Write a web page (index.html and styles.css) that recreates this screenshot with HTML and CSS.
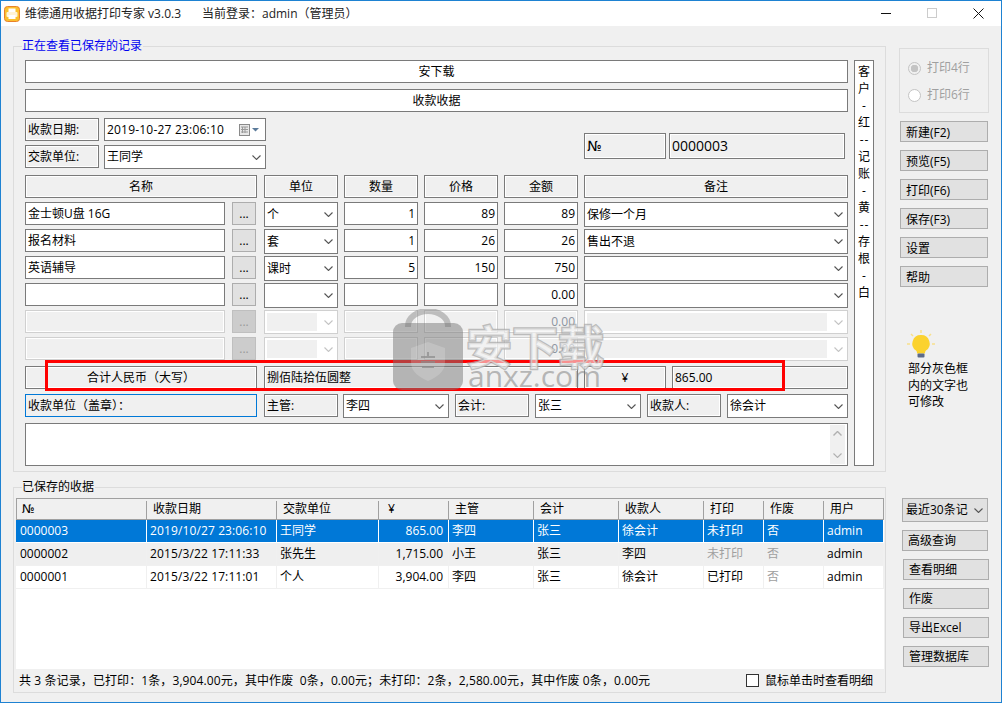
FILE: index.html
```html
<!DOCTYPE html>
<html lang="zh">
<head>
<meta charset="utf-8">
<title>维德通用收据打印专家</title>
<link rel="stylesheet" href="styles.css">
</head>
<body>
<svg class="defs" width="0" height="0" aria-hidden="true">
  <defs>
    <symbol id="chev" viewBox="0 0 9 5"><path d="M.5.5 4.5 4.5 8.5.5" fill="none" stroke="currentColor" stroke-width="1.1"/></symbol>
    <symbol id="chevup" viewBox="0 0 9 5"><path d="M.5 4.5 4.5.5 8.5 4.5" fill="none" stroke="currentColor" stroke-width="1.4"/></symbol>
  </defs>
</svg>
<div class="window">
  <header class="titlebar">
    <svg class="appicon" width="16" height="16" viewBox="0 0 16 16"><rect x=".5" y=".5" width="15" height="15" rx="3" fill="#fbc02d" stroke="#e9812a"/><rect x="4.5" y="2.5" width="7" height="3.5" fill="#fff"/><rect x="2.5" y="6" width="11" height="5" rx="1" fill="#fff3d6"/><rect x="4.5" y="9" width="7" height="4" fill="#fff"/></svg>
    <span class="apptitle">维德通用收据打印专家 v3.0.3</span>
    <span class="login">当前登录：admin（管理员）</span>
    <div class="winctl">
      <span class="ctl"><svg width="11" height="11" viewBox="0 0 11 11"><path d="M0 5.5h10" stroke="#111"/></svg></span>
      <span class="ctl"><svg width="11" height="11" viewBox="0 0 11 11"><rect x=".5" y=".5" width="9" height="9" fill="none" stroke="#ccc"/></svg></span>
      <span class="ctl"><svg width="11" height="11" viewBox="0 0 11 11"><path d="M.5.5l10 10M10.500.5l-10 10" stroke="#111"/></svg></span>
    </div>
  </header>

  <div class="content">
    <div class="toprow">
      <fieldset class="group group-form">
        <legend class="legend legend-blue">正在查看已保存的记录</legend>
        <div class="formwrap">
          <div class="form">
            <div class="fld bar c">安下载</div>
            <div class="fld bar c">收款收据</div>
            <div class="metarow">
              <div class="metaleft">
                <div class="r">
                  <div class="fld lab w-lab">收款日期:</div>
                  <div class="fld val w-val"><span class="stamp">2019-10-27 23:06:10</span>
                    <svg class="cal" width="21" height="12" viewBox="0 0 21 12"><rect x=".5" y=".5" width="10" height="11" fill="#e8e8e8" stroke="#8a8a8a"/><path d="M2 3h7M2 5.500h7M2 8h7M3.500 3v6M6 3v6" stroke="#9a9a9a"/><path d="M13 4h7l-3.500 3.500z" fill="#5a7a9a"/></svg>
                  </div>
                </div>
                <div class="r">
                  <div class="fld lab w-lab">交款单位:</div>
                  <div class="fld val w-val sel">王同学<svg class="chev"><use href="#chev"/></svg></div>
                </div>
              </div>
              <div class="metaright">
                <div class="fld lab no no-a">№</div>
                <div class="fld lab no no-b">0000003</div>
              </div>
            </div>

            <div class="r head">
              <div class="fld lab c w-head">名称</div>
              <div class="fld lab c w-unit">单位</div>
              <div class="fld lab c w-n">数量</div>
              <div class="fld lab c w-n">价格</div>
              <div class="fld lab c w-n">金额</div>
              <div class="fld lab c w-note">备注</div>
            </div>

            <div class="r item">
              <div class="fld val w-name">金士顿U盘 16G</div><div class="more w-more">...</div>
              <div class="fld val tall sel w-unit">个<svg class="chev"><use href="#chev"/></svg></div>
              <div class="fld val num w-n">1</div><div class="fld val num w-n">89</div><div class="fld val num w-n">89</div>
              <div class="fld val tall sel w-note">保修一个月<svg class="chev"><use href="#chev"/></svg></div>
            </div>
            <div class="r item">
              <div class="fld val w-name">报名材料</div><div class="more w-more">...</div>
              <div class="fld val tall sel w-unit">套<svg class="chev"><use href="#chev"/></svg></div>
              <div class="fld val num w-n">1</div><div class="fld val num w-n">26</div><div class="fld val num w-n">26</div>
              <div class="fld val tall sel w-note">售出不退<svg class="chev"><use href="#chev"/></svg></div>
            </div>
            <div class="r item">
              <div class="fld val w-name">英语辅导</div><div class="more w-more">...</div>
              <div class="fld val tall sel w-unit">课时<svg class="chev"><use href="#chev"/></svg></div>
              <div class="fld val num w-n">5</div><div class="fld val num w-n">150</div><div class="fld val num w-n">750</div>
              <div class="fld val tall sel w-note"><svg class="chev"><use href="#chev"/></svg></div>
            </div>
            <div class="r item">
              <div class="fld val w-name"></div><div class="more w-more">...</div>
              <div class="fld val tall sel w-unit"><svg class="chev"><use href="#chev"/></svg></div>
              <div class="fld val num w-n"></div><div class="fld val num w-n"></div><div class="fld val num w-n">0.00</div>
              <div class="fld val tall sel w-note"><svg class="chev"><use href="#chev"/></svg></div>
            </div>
            <div class="r item">
              <div class="fld off w-name"></div><div class="more more-off w-more">...</div>
              <div class="fld offsel w-unit"><span class="offfill"></span><svg class="chev"><use href="#chev"/></svg></div>
              <div class="fld off w-n"></div><div class="fld off w-n"></div><div class="fld off num w-n">0.00</div>
              <div class="fld offsel w-note"><span class="offfill"></span><svg class="chev"><use href="#chev"/></svg></div>
            </div>
            <div class="r item">
              <div class="fld off w-name"></div><div class="more more-off w-more">...</div>
              <div class="fld offsel w-unit"><span class="offfill"></span><svg class="chev"><use href="#chev"/></svg></div>
              <div class="fld off w-n"></div><div class="fld off w-n"></div><div class="fld off num w-n">0.00</div>
              <div class="fld offsel w-note"><span class="offfill"></span><svg class="chev"><use href="#chev"/></svg></div>
            </div>

            <div class="r total">
              <div class="fld lab c w-head">合计人民币（大写）</div>
              <div class="fld lab w-big">捌佰陆拾伍圆整</div>
              <div class="fld lab c w-yen">¥</div>
              <div class="fld lab w-sum">865.00</div>
            </div>

            <div class="r sign">
              <div class="fld lab active w-head">收款单位（盖章）：</div>
              <div class="fld lab w-unit">主管:</div>
              <div class="fld val sel w-s1">李四<svg class="chev"><use href="#chev"/></svg></div>
              <div class="fld lab w-l2">会计:</div>
              <div class="fld val sel w-s2">张三<svg class="chev"><use href="#chev"/></svg></div>
              <div class="fld lab w-l2">收款人:</div>
              <div class="fld val sel w-s3">徐会计<svg class="chev"><use href="#chev"/></svg></div>
            </div>

            <div class="memo">
              <div class="scroll">
                <svg class="chev"><use href="#chevup"/></svg>
                <svg class="chev"><use href="#chev"/></svg>
              </div>
            </div>
          </div>

          <div class="stub">
            <span>客</span><span>户</span><span>-</span><span>红</span><span>--</span><span>记</span><span>账</span><span>-</span><span>黄</span><span>--</span><span>存</span><span>根</span><span>-</span><span>白</span>
          </div>
        </div>
      </fieldset>

      <aside class="side side-top">
        <div class="radios">
          <div class="radio"><span class="dot on"></span>打印4行</div>
          <div class="radio"><span class="dot"></span>打印6行</div>
        </div>
        <div class="btn">新建(F2)</div>
        <div class="btn">预览(F5)</div>
        <div class="btn">打印(F6)</div>
        <div class="btn">保存(F3)</div>
        <div class="btn">设置</div>
        <div class="btn">帮助</div>
        <svg class="bulb" width="28" height="29" viewBox="0 0 28 29">
          <g stroke="#f7e08c" stroke-width="1.500"><path d="M14 0v3M4 4l2 2M24 4l-2 2M0 14h3M25 14h3"/></g>
          <path d="M14 5a8.500 8.500 0 0 0-5 15.500c1 1 1 2 1 3h8c0-1 0-2 1-3A8.500 8.500 0 0 0 14 5z" fill="#fbd22e"/>
          <rect x="10.500" y="23.500" width="7" height="4" rx="1" fill="#5d6b8a"/>
        </svg>
        <p class="tip">部分灰色框<br>内的文字也<br>可修改</p>
      </aside>
    </div>

    <div class="bottomrow">
      <fieldset class="group group-list">
        <legend class="legend legend-list">已保存的收据</legend>
        <div class="tablewrap">
          <table class="grid">
            <colgroup>
              <col class="c131"><col class="c130"><col class="c102"><col class="c70"><col class="c85"><col class="c85"><col class="c85"><col class="c60"><col class="c60"><col class="c60">
            </colgroup>
            <thead>
              <tr><th class="nosign">№</th><th>收款日期</th><th>交款单位</th><th class="yen">¥</th><th>主管</th><th>会计</th><th>收款人</th><th>打印</th><th>作废</th><th>用户</th></tr>
            </thead>
            <tbody>
              <tr class="selrow"><td>0000003</td><td class="when">2019/10/27 23:06:10</td><td>王同学</td><td class="amt">865.00</td><td>李四</td><td>张三</td><td>徐会计</td><td>未打印</td><td>否</td><td>admin</td></tr>
              <tr class="alt"><td>0000002</td><td class="when">2015/3/22 17:11:33</td><td>张先生</td><td class="amt">1,715.00</td><td>小王</td><td>张三</td><td>李四</td><td class="mute">未打印</td><td class="mute">否</td><td>admin</td></tr>
              <tr><td>0000001</td><td class="when">2015/3/22 17:11:01</td><td>个人</td><td class="amt">3,904.00</td><td>李四</td><td>张三</td><td>徐会计</td><td>已打印</td><td class="mute">否</td><td>admin</td></tr>
            </tbody>
          </table>
        </div>
        <div class="status">
          <span class="summary">共 3 条记录，已打印：1条，3,904.00元，其中作废&nbsp; 0条，0.00元；未打印：2条，2,580.00元，其中作废 0条，0.00元</span>
          <span class="check"><span class="box"></span>鼠标单击时查看明细</span>
        </div>
      </fieldset>
      <aside class="side side-bottom">
        <div class="fld val sel filter"><span class="clip">最近30条记录</span><svg class="chev"><use href="#chev"/></svg></div>
        <div class="btn btn-b first">高级查询</div>
        <div class="btn btn-b">查看明细</div>
        <div class="btn btn-b">作废</div>
        <div class="btn btn-b">导出Excel</div>
        <div class="btn btn-b">管理数据库</div>
      </aside>
    </div>
  </div>

  <div class="highlight"></div>
  <div class="watermark">
    <svg class="wm-lock" width="72" height="82" viewBox="0 0 72 82">
      <path d="M16 18V17a20 15 0 0 1 40 0v1" fill="none" stroke="#8a8a8a" stroke-opacity=".5" stroke-width="6"/>
      <rect x="1" y="14" width="70" height="67" rx="9" fill="#777" fill-opacity=".5"/>
      <path d="M36 33l17 6v14c0 10-8 15-17 19-9-4-17-9-17-19V39z" fill="#fff" fill-opacity=".18"/>
      <path d="M29 48h14M29 53h14M36 43v4M30 58h12" stroke="#8a8a8a" stroke-opacity=".7" stroke-width="2" fill="none"/>
    </svg>
    <div class="wm-text">
      <div class="wm-cn">安下载</div>
      <div class="wm-en">anxz.com</div>
    </div>
  </div>
</div>
</body>
</html>
```

FILE: styles.css
```css
* { box-sizing: border-box; }
html, body { margin: 0; padding: 0; }
body {
  width: 1002px;
  height: 703px;
  overflow: hidden;
  font-family: "Open Sans", "Noto Sans CJK SC", sans-serif;
  font-size: 12px;
  line-height: 16px;
  color: #000;
}
.defs { position: absolute; }

.window {
  position: relative;
  width: 1002px;
  height: 703px;
  border: 1px solid #1e82d2;
  background: #f0f0f0;
  display: flex;
  flex-direction: column;
  overflow: hidden;
}

/* Title bar */
.titlebar {
  height: 25px;
  background: #fff;
  display: flex;
  align-items: center;
  padding-left: 3px;
  color: #222;
}
.appicon { margin-right: 5px; }
.apptitle { width: 177px; }
.winctl { margin-left: auto; display: flex; }
.ctl { width: 46px; height: 25px; display: flex; align-items: center; justify-content: center; }

/* Main layout */
.content { flex: 1; padding: 12px 0 0 12px; display: flex; flex-direction: column; }
.toprow, .bottomrow { display: flex; }
.bottomrow { margin-top: 7px; }

.group {
  margin: 0;
  min-width: 0;
  border: 1px solid #dcdcdc;
}
.legend { padding: 0 1px 0 0; margin-left: -3px; height: 16px; }
.legend-blue { color: #0000f0; }
.legend-list { margin-left: 6px; }
.group-form { width: 873px; padding: 6px 11px 5px; }
.group-list { width: 873px; height: 214px; padding: 3px 1px 0 2px; }
.formwrap { display: flex; gap: 6px; }
.form { width: 823px; }

/* Fields */
.fld {
  height: 23px;
  display: flex;
  align-items: center;
  padding: 0 2px;
  border: 1px solid #7a7a7a;
  white-space: nowrap;
  flex: none;
}
.c { justify-content: center; }
.bar { background: #fff; margin-bottom: 6px; }
.val { background: #fff; }
.lab { background: #f0f0f0; box-shadow: inset 0 0 0 1px #fff; }
.num { justify-content: flex-end; }
.sel { height: 24px; padding-right: 4px; }
.tall { height: 25px; }
.active { border-color: #0078d7; box-shadow: none; }
.off { background: #f0f0f0; border-color: #d0d0d0; box-shadow: inset 0 0 0 1px #fff; color: #8c94a0; }
.offsel {
  background: #fff;
  border-color: #d0d0d0;
  height: 24px;
  padding: 2px 4px 2px 2px;
  color: #c4c4c4;
}
.offfill { flex: 1; align-self: stretch; background: #f0f0f0; margin-right: 7px; }
.chev { width: 9px; height: 5px; color: #555; flex: none; margin-left: auto; }
.offsel .chev { color: #c4c4c4; margin-left: 0; }

.r { display: flex; }
.w-lab { width: 74px; }
.w-val { width: 162px; margin-left: 5px; }
.stamp { letter-spacing: .2px; }
.cal { margin-left: auto; margin-right: 3px; }

.metarow { display: flex; }
.metaleft { display: flex; flex-direction: column; gap: 4px; }
.metaright { display: flex; margin: 15px 0 0 318px; gap: 3px; }
.no { height: 26px; font-size: 14px; }
.no-a { width: 82px; font-family: "DejaVu Sans", sans-serif; }
.no-b { width: 176px; }

.head { margin: 6px 0 4px; }
.item { height: 27px; }
.w-head { width: 232px; }
.w-name { width: 200px; }
.more {
  width: 24px;
  height: 23px;
  margin-left: 7px;
  border: 1px solid #adadad;
  background: #e1e1e1;
  display: flex;
  align-items: center;
  justify-content: center;
  flex: none;
}
.more-off { background: #cccccc; border-color: #bfbfbf; color: #9a9a9a; }
.w-unit { width: 74px; margin-left: 7px; }
.item .w-unit { margin-left: 8px; }
.w-n { width: 74px; margin-left: 6px; }
.w-note { width: 264px; margin-left: 6px; }

.total { margin-top: 2px; }
.w-big { width: 314px; margin-left: 7px; }
.w-yen { width: 82px; margin-left: 6px; }
.w-sum { width: 176px; margin-left: 6px; padding-left: 2px; }

.sign { margin-top: 5px; }
.w-s1 { width: 106px; margin-left: 5px; }
.w-s2 { width: 106px; margin-left: 6px; }
.w-s3 { width: 121px; margin-left: 6px; }
.w-l2 { width: 74px; margin-left: 6px; }

.memo {
  height: 43px;
  margin-top: 5px;
  border: 1px solid #7a7a7a;
  background: #fff;
  display: flex;
  justify-content: flex-end;
  padding: 1px 2px 1px 0;
}
.scroll {
  width: 15px;
  background: #f0f0f0;
  display: flex;
  flex-direction: column;
  justify-content: space-between;
  align-items: center;
  padding: 6px 0;
}
.scroll .chev { color: #b0b0b0; margin: 0; }

.stub {
  width: 20px;
  border: 1px solid #7a7a7a;
  background: #fff;
  display: flex;
  flex-direction: column;
  align-items: center;
  padding-top: 2px;
  line-height: 17px;
}
.stub span { height: 17px; letter-spacing: 1px; margin-right: -1px; }

/* Side panels */
.side { display: flex; flex-direction: column; }
.side-top { margin-left: 13px; width: 90px; padding-top: 10px; }
.radios {
  height: 65px;
  width: 90px;
  border: 1px solid #dcdcdc;
  display: flex;
  flex-direction: column;
  gap: 11px;
  padding: 11px 0 0 8px;
  color: #a0a0a0;
}
.radio { display: flex; align-items: center; height: 16px; }
.dot {
  width: 13px;
  height: 13px;
  border-radius: 50%;
  border: 1px solid #c4c4c4;
  background: #fff;
  margin-right: 6px;
  flex: none;
}
.dot.on { border-color: #c4c4c4; background: radial-gradient(circle, #c4c4c4 0 3.500px, #f0f0f0 4px); }
.btn {
  width: 88px;
  height: 21px;
  margin: 8px 0 0 1px;
  border: 1px solid #adadad;
  background: #e1e1e1;
  display: flex;
  align-items: center;
  padding: 2px 0 0 5px;
  flex: none;
}
.bulb { margin: 43px 0 0 8px; }
.tip { margin: 2px 0 0 9px; line-height: 16.500px; }

.side-bottom { margin-left: 16px; padding-top: 19px; width: 88px; }
.filter { width: 86px; height: 24px; padding-left: 3px; background: #e1e1e1; border-color: #adadad; }
.clip { width: 62px; overflow: hidden; }
.btn-b { margin-left: 1px; width: 86px; padding-top: 0; }
.btn-b.first { margin-left: 0; }

/* Table */
.tablewrap { height: 171px; background: #fff; width: 868px; }
.grid { table-layout: fixed; width: 868px; border-collapse: separate; border-spacing: 0; }
.c131 { width: 131px; }
.c130 { width: 130px; }
.c102 { width: 102px; }
.c70 { width: 70px; }
.c85 { width: 85px; }
.c60 { width: 60px; }
.grid th {
  height: 22px;
  padding: 0 0 0 6px;
  font-weight: 400;
  text-align: left;
  background: linear-gradient(#a0a0a0, #a0a0a0) no-repeat right 0 top 2px / 1px 100% #f0f0f0;
  border-top: 1px solid #a0a0a0;
  border-bottom: 1px solid #a0a0a0;
}
.grid th:first-child { border-left: 1px solid #a0a0a0; padding-left: 5px; }
.grid th:last-child { border-right: 1px solid #a0a0a0; background: #f0f0f0; }
.grid th.nosign { font-family: "DejaVu Sans", sans-serif; }
.grid th.yen { padding-left: 9px; }
.grid td {
  height: 23px;
  padding: 0 0 0 3px;
  border-right: 1px solid #f0f0f0;
  border-bottom: 1px solid #f0f0f0;
  white-space: nowrap;
  overflow: hidden;
}
.grid td:first-child { padding-left: 4px; }
.grid td.amt { text-align: right; padding-right: 5px; }
.grid td.when { letter-spacing: .12px; }
.selrow td { background: #0078d7; color: #fff; border-right-color: #fff; border-bottom-color: #fff; }
.alt td { background: #efefef; }
.mute, .grid td.mute { color: #a0a0a0; }

.status { display: flex; justify-content: space-between; align-items: center; height: 23px; padding: 0 11px 0 3px; white-space: nowrap; }
.summary { letter-spacing: .1px; }
.check { display: flex; align-items: center; }
.box { width: 13px; height: 13px; border: 1px solid #333; background: #fff; margin-right: 6px; }

/* Overlays */
.highlight {
  position: absolute;
  left: 44px;
  top: 359px;
  width: 740px;
  height: 31px;
  border: 3px solid #ff0000;
}
.watermark {
  position: absolute;
  left: 391px;
  top: 308px;
  display: flex;
  pointer-events: none;
}
.wm-text { margin-left: 2px; }
.wm-cn {
  font-size: 46px;
  line-height: 46px;
  margin-top: 14px;
  font-weight: 700;
  color: rgba(244, 244, 244, .6);
  -webkit-text-stroke: 2.500px rgba(170, 170, 170, .75);
  paint-order: stroke fill;
}
.wm-en {
  font-family: "Open Sans", sans-serif;
  font-size: 30px;
  line-height: 30px;
  color: rgba(130, 130, 130, .55);
  margin: -8px 0 0 2px;
}
```
